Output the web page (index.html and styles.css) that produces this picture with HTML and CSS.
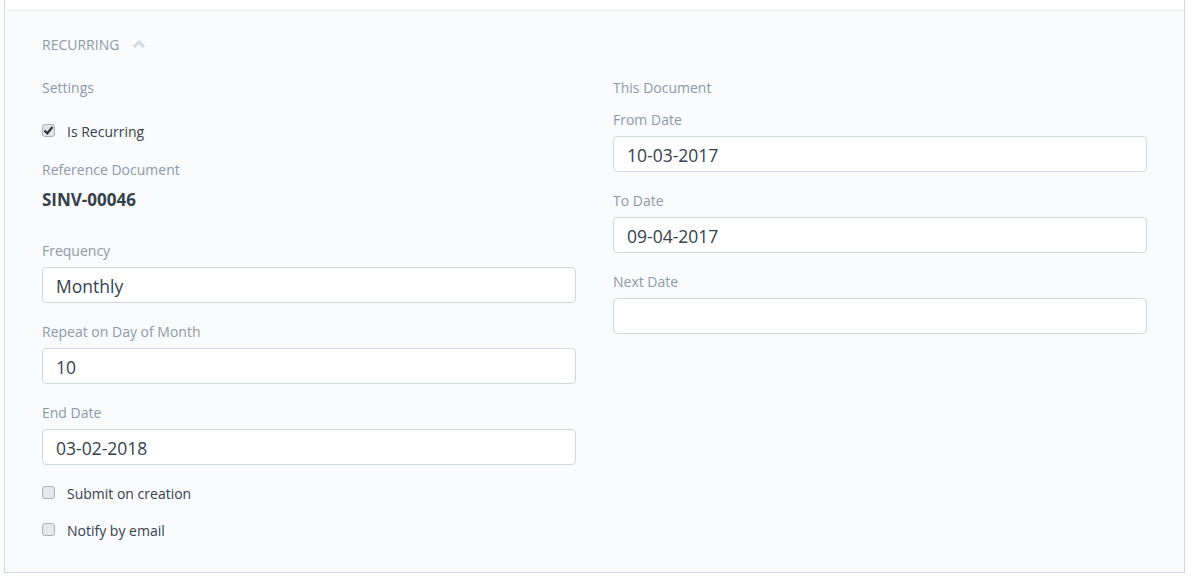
FILE: index.html
```html
<!DOCTYPE html>
<html lang="en">
<head>
  <meta charset="UTF-8">
  <title>Recurring</title>
  <link rel="stylesheet" href="styles.css">
</head>
<body>
<div class="form-page">
  <div class="form-top"></div>
  <div class="form-section">
    <div class="section-head">
      <span>Recurring</span>
      <svg class="chevron" width="14" height="10" viewBox="0 0 14 10">
        <polyline points="2,8 7,3 12,8" fill="none" stroke="#d1d8dd" stroke-width="3"/>
      </svg>
    </div>
    <div class="section-body">
      <!-- 左列 -->
      <div class="form-column">
        <div class="column-head">Settings</div>
        <div class="check first">
          <span class="box checked">
            <svg width="11" height="11" viewBox="0 0 11 11">
              <polyline points="1.5,5.5 4.3,8.3 9.5,2" fill="none" stroke="#2f343a" stroke-width="2.2"/>
            </svg>
          </span>
          <span class="check-label">Is Recurring</span>
        </div>
        <div class="field">
          <div class="label">Reference Document</div>
          <div class="static-value">SINV-00046</div>
        </div>
        <div class="field">
          <div class="label">Frequency</div>
          <div class="input">Monthly</div>
        </div>
        <div class="field">
          <div class="label">Repeat on Day of Month</div>
          <div class="input">10</div>
        </div>
        <div class="field">
          <div class="label">End Date</div>
          <div class="input">03-02-2018</div>
        </div>
        <div class="check">
          <span class="box"></span>
          <span class="check-label">Submit on creation</span>
        </div>
        <div class="check">
          <span class="box"></span>
          <span class="check-label">Notify by email</span>
        </div>
      </div>
      <!-- 右列 -->
      <div class="form-column">
        <div class="column-head">This Document</div>
        <div class="field">
          <div class="label">From Date</div>
          <div class="input">10-03-2017</div>
        </div>
        <div class="field">
          <div class="label">To Date</div>
          <div class="input">09-04-2017</div>
        </div>
        <div class="field">
          <div class="label">Next Date</div>
          <div class="input"></div>
        </div>
      </div>
    </div>
  </div>
</div>
</body>
</html>
```

FILE: styles.css
```css
* {
  margin: 0;
  padding: 0;
  box-sizing: border-box;
}
body {
  background: #fff;
  font-family: "Open Sans", "Noto Sans", sans-serif;
  color: #36414c;
}
.form-page {
  width: 1181px;
  margin-left: 4px;
  border: 1px solid #d1d8dd;
  border-top: none;
}
.form-top {
  height: 11px;
  border-bottom: 1px solid #ebeff2;
}
.form-section {
  background: #fafbfc;
  padding: 24px 37px 14px;
}
.section-head {
  height: 20px;
  line-height: 20px;
  margin-bottom: 23px;
  display: flex;
  align-items: center;
  gap: 13px;
  font-size: 14px;
  text-transform: uppercase;
  color: #8d99a6;
}
.section-head .chevron {
  margin-top: -2px;
}
.section-body {
  display: grid;
  grid-template-columns: 1fr 1fr;
  column-gap: 37px;
}
.column-head {
  height: 20px;
  line-height: 20px;
  font-size: 14px;
  color: #8d99a6;
  margin-bottom: 12px;
}
.field {
  margin-bottom: 19px;
}
.label {
  height: 20px;
  line-height: 20px;
  font-size: 14px;
  color: #8d99a6;
  margin-bottom: 6px;
}
/* 只读值 */
.static-value {
  height: 20px;
  line-height: 20px;
  margin-top: 10px;
  margin-bottom: 31px;
  font-size: 17px;
  font-weight: 700;
  color: #36414c;
}
.input {
  height: 36px;
  line-height: 32px;
  padding: 2px 13px 0;
  background: #fff;
  border: 1px solid #d1d8dd;
  border-radius: 4px;
  font-size: 17.5px;
  color: #36414c;
}
.check {
  height: 18px;
  display: flex;
  align-items: center;
  margin-bottom: 19px;
}
.check.first {
  margin-top: 24px;
  margin-bottom: 20px;
}
.check .box {
  width: 13px;
  height: 13px;
  border: 1px solid #a9b0b6;
  border-radius: 3px;
  background: #e6e8ea;
  display: flex;
  align-items: center;
  justify-content: center;
  margin-top: -2px;
}
.check .box.checked {
  background: #e1e3e5;
}
.check-label {
  margin-left: 12px;
  font-size: 14px;
  color: #36414c;
}
```
